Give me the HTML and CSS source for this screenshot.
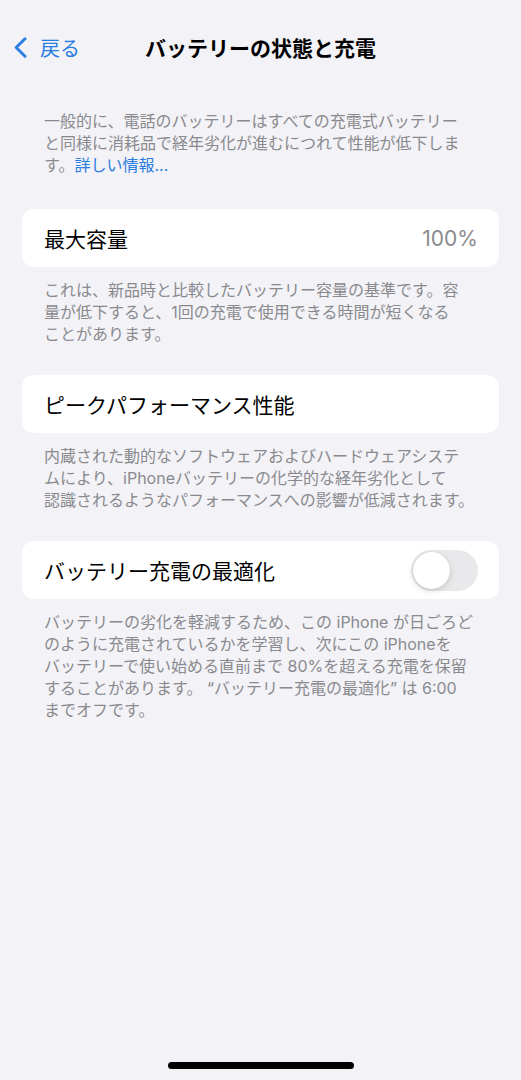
FILE: index.html
```html
<!doctype html>
<html lang="ja">
 <head>
	<meta charset="UTF-8">
	<title>バッテリーの状態と充電</title>
	<link rel="stylesheet" href="styles.css">
 </head>
 <body>
	<div class="page">
		<header class="nav">
			<a class="nav_back" href="#">
				<svg width="13" height="21" viewBox="0 0 13 21">
					<path d="M11 1.8 L2.2 10.5 L11 19.2" fill="none" stroke="currentColor" stroke-width="3" stroke-linecap="round" stroke-linejoin="round"/>
				</svg>
				<span>戻る</span>
			</a>
			<h1 class="nav_title">バッテリーの状態と充電</h1>
			<div></div>
		</header>

		<p class="intro">
			一般的に、電話のバッテリーはすべての充電式バッテリー<br>
			と同様に消耗品で経年劣化が進むにつれて性能が低下しま<br>
			す。<a class="link" href="#">詳しい情報...</a>
		</p>

		<!-- 最大容量 -->
		<div class="card">
			<span class="card_label">最大容量</span>
			<span class="card_value">100%</span>
		</div>
		<p class="note">
			これは、新品時と比較したバッテリー容量の基準です。容<br>
			量が低下すると、1回の充電で使用できる時間が短くなる<br>
			ことがあります。
		</p>

		<!-- ピークパフォーマンス性能 -->
		<div class="card">
			<span class="card_label">ピークパフォーマンス性能</span>
		</div>
		<p class="note">
			内蔵された動的なソフトウェアおよびハードウェアシステ<br>
			ムにより、iPhoneバッテリーの化学的な経年劣化として<br>
			認識されるようなパフォーマンスへの影響が低減されます。
		</p>

		<!-- バッテリー充電の最適化 -->
		<div class="card">
			<span class="card_label">バッテリー充電の最適化</span>
			<span class="switch"><span class="switch_knob"></span></span>
		</div>
		<p class="note">
			バッテリーの劣化を軽減するため、この iPhone が日ごろど<br>
			のように充電されているかを学習し、次にこの iPhoneを<br>
			バッテリーで使い始める直前まで 80%を超える充電を保留<br>
			することがあります。 “バッテリー充電の最適化” は 6:00<br>
			までオフです。
		</p>

		<div class="home_bar"></div>
	</div>
 </body>
</html>
```

FILE: styles.css
```css
html,body{margin:0;padding:0}
body{
	background:#f2f2f7;
	font-family:Inter,"Noto Sans CJK JP",sans-serif;
	color:#000;
}
.page{
	min-height:100vh;
	display:flex;
	flex-direction:column;
}

/*上の戻るバー*/
.nav{
	display:grid;
	grid-template-columns:1fr auto 1fr;
	align-items:center;
	height:44px;
	padding-top:25px;
}
.nav_back{
	display:flex;
	align-items:center;
	gap:13px;
	padding-left:14px;
	color:#2a7de1;
	text-decoration:none;
	font-size:20px;
}
.nav_back svg{display:block}
.nav_title{
	margin:0;
	font-size:21px;
	font-weight:700;
	letter-spacing:0;
}

/*説明文*/
.intro,.note{
	margin:0;
	padding:0 44px;
	font-size:16px;
	line-height:22px;
	color:#8a8a8e;
	white-space:nowrap;
}
.intro{margin-top:41px;margin-bottom:33px}
.note{padding-top:12px;margin-bottom:30px}
.link{color:#2a7de1;text-decoration:none}

/*白いカード*/
.card{
	display:flex;
	align-items:center;
	justify-content:space-between;
	height:58px;
	margin:0 22px;
	padding:0 21px 0 22px;
	background:#fff;
	border-radius:12px;
}
.card_label{font-size:21px}
.card_value{font-size:21px;color:#8a8a8e}

/*スイッチ オフ状態*/
.switch{
	width:67px;
	height:41px;
	border-radius:21px;
	background:#e9e9eb;
	display:flex;
	align-items:center;
	padding:0 2px;
	box-sizing:border-box;
}
.switch_knob{
	width:37px;
	height:37px;
	border-radius:50%;
	background:#fff;
	box-shadow:0 2px 6px rgba(0,0,0,.15),0 0 1px rgba(0,0,0,.12);
}

.home_bar{
	width:186px;
	height:7px;
	border-radius:4px;
	background:#000;
	margin:auto auto 11px;
}
```
